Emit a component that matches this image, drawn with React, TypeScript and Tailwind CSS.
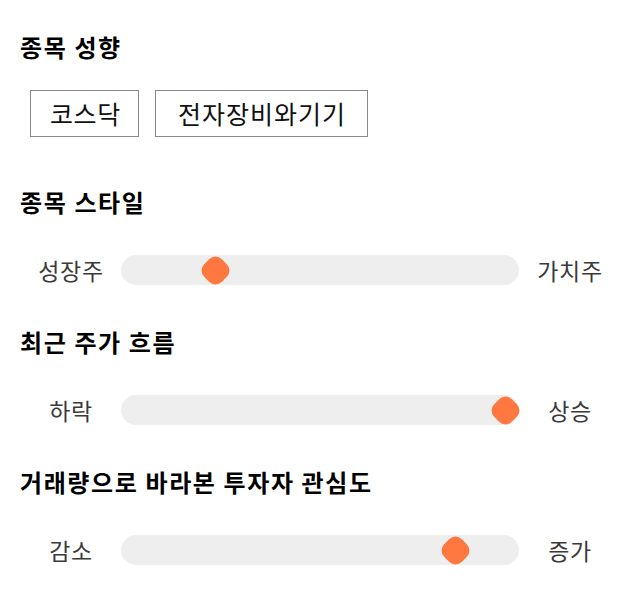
import React from 'react'

const font = { fontFamily: '"Noto Sans CJK KR", "Noto Sans", sans-serif' }

function Slider({ left, right, pos }: { left: string; right: string; pos: number }) {
  return (
    <div className="flex items-center h-[30px]">
      <div className="w-[101px] pl-[1px] text-center text-[23px] tracking-[0.6px] text-[#3a3a3a] leading-[30px]">{left}</div>
      <div className="relative flex-1 h-[30px] rounded-full bg-[#eeeeee]">
        <div
          className="absolute top-[1px] w-[28px] h-[28px] flex items-center justify-center"
          style={{ left: pos }}
        >
          <div className="w-[25px] h-[25px] shrink-0 rotate-45 rounded-[9px] bg-[#ff7840]" />
        </div>
      </div>
      <div className="w-[101px] pl-[1px] text-center text-[23px] tracking-[0.6px] text-[#3a3a3a] leading-[30px]">{right}</div>
    </div>
  )
}

export default function App() {
  return (
    <div className="min-h-screen bg-white px-5 pt-[30px]" style={font}>
      {/* 종목 성향 */}
      <h2 className="text-[24px] font-bold tracking-[1.6px] text-black leading-[34px]">종목 성향</h2>
      <div className="flex gap-4 ml-[10px] mt-[26px]">
        <div className="h-[47px] w-[109px] pl-[19px] border border-[#888] flex items-center text-[25px] tracking-[0.6px] text-[#111]">코스닥</div>
        <div className="h-[47px] w-[213px] pl-[22px] border border-[#888] flex items-center text-[25px] tracking-[1px] text-[#111]">전자장비와기기</div>
      </div>

      <h2 className="text-[24px] font-bold tracking-[1.6px] text-black leading-[34px] mt-[48px]">종목 스타일</h2>
      <div className="mt-[36px]">
        <Slider left="성장주" right="가치주" pos={80} />
      </div>

      <h2 className="text-[24px] font-bold tracking-[1.6px] text-black leading-[34px] mt-[40px]">최근 주가 흐름</h2>
      <div className="mt-[36px]">
        <Slider left="하락" right="상승" pos={370} />
      </div>

      <h2 className="text-[24px] font-bold tracking-[1.6px] text-black leading-[34px] mt-[40px]">거래량으로 바라본 투자자 관심도</h2>
      <div className="mt-[36px]">
        <Slider left="감소" right="증가" pos={320} />
      </div>
    </div>
  )
}
